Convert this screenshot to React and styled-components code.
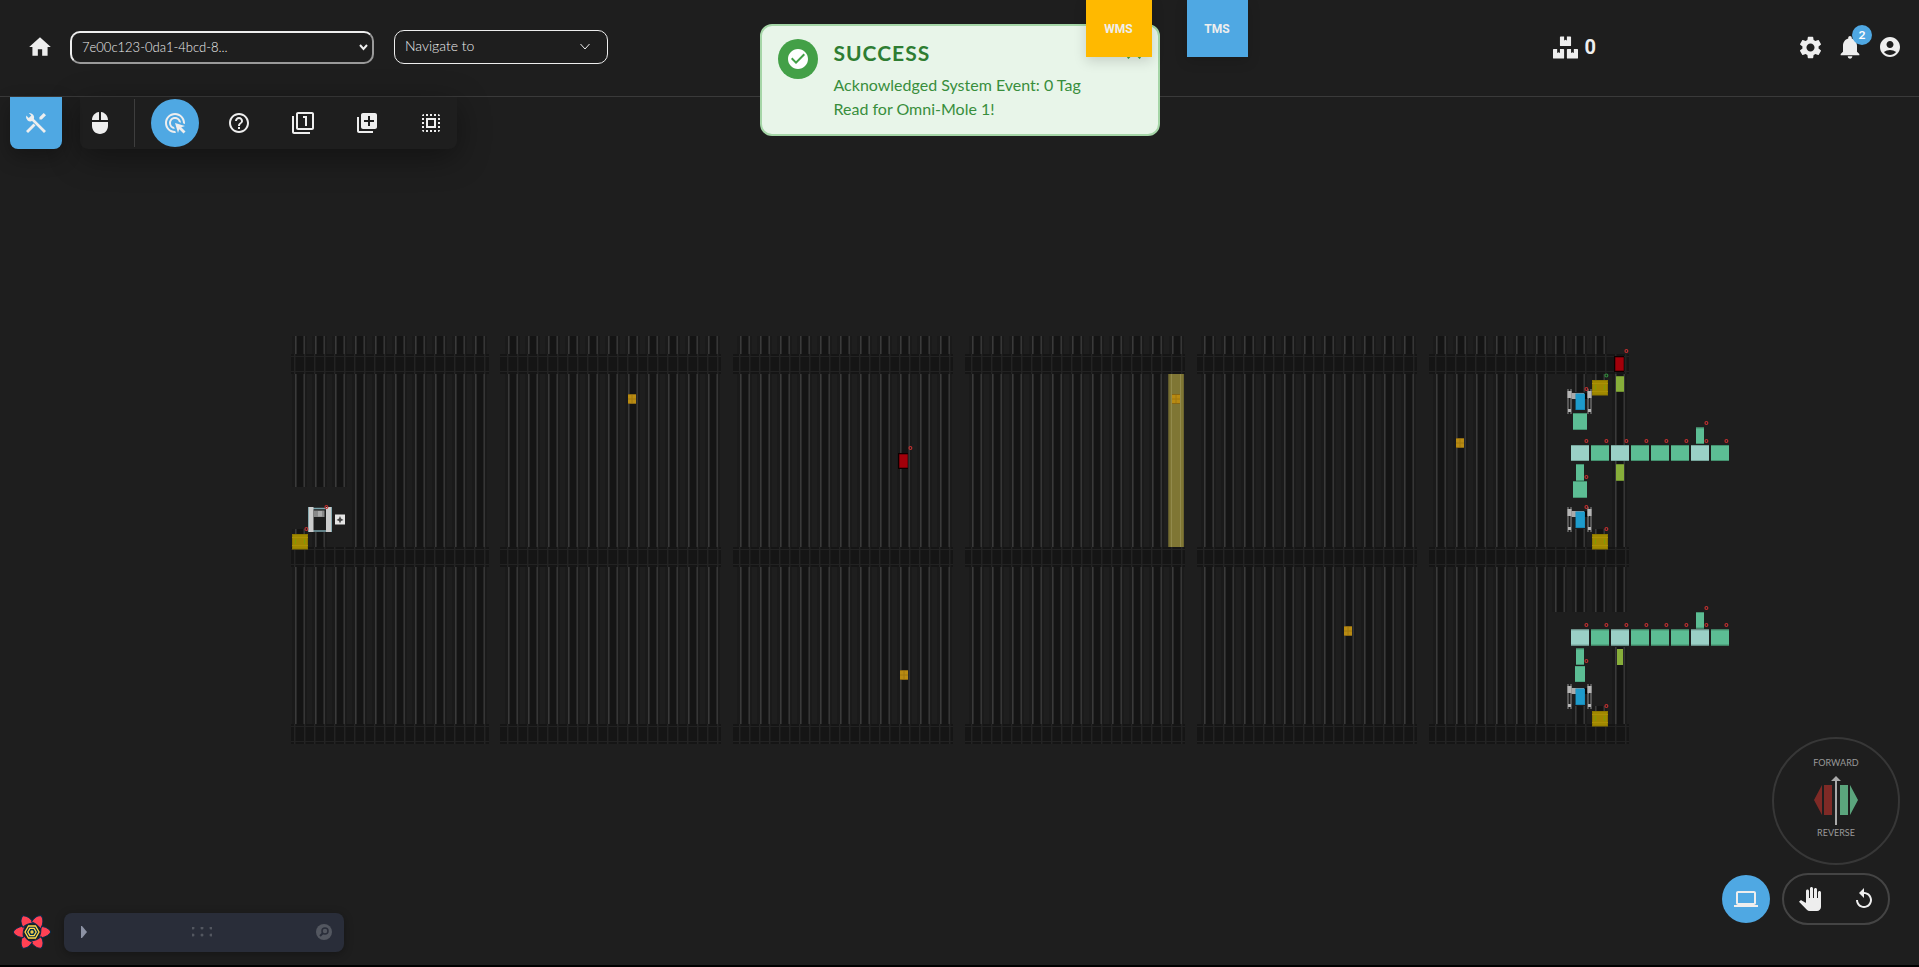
import React from "react";
import styled, { createGlobalStyle } from "styled-components";
import {
  MdHome, MdMouse, MdAdsClick, MdHelpOutline, MdOutlineFilter1, MdAddToPhotos, MdSelectAll,
  MdSettings, MdNotifications, MdAccountCircle, MdPanTool, MdReplay, MdOutlineLaptop, MdCheckCircle, MdClose,
} from "react-icons/md";
import { FaBoxes } from "react-icons/fa";

const FONT = '"Lato", "Open Sans", sans-serif';

const GlobalStyle = createGlobalStyle`
  *, *::before, *::after { box-sizing: border-box; }
  html { background: #000; }
  body { margin: 0; color: #eee; font-family: ${FONT}; }
  button, select, input { font-family: inherit; }
`;

const Page = styled.div`
  position: relative;
  display: flex;
  flex-direction: column;
  height: calc(100vh - 2px);
  background: #1e1e1e;
  overflow: hidden;
`;

const Header = styled.header`
  display: flex;
  align-items: center;
  height: 97px;
  padding: 0 17px 2px 28px;
  border-bottom: 1px solid #3a3a3a;
`;

const IconButton = styled.button`
  display: flex;
  position: relative;
  align-items: center;
  justify-content: center;
  width: ${(p) => p.$width || 24}px;
  height: ${(p) => p.$height || 24}px;
  padding: 0;
  border: 0;
  border-radius: ${(p) => p.$radius || "0"};
  background: ${(p) => (p.$active ? "#4fa8e3" : "transparent")};
  color: #eee;
  font-size: ${(p) => p.$size || 24}px;
  cursor: pointer;

  svg { flex: none; }
`;

const SelectWrap = styled.label`
  display: flex;
  position: relative;
  align-items: center;
  margin-left: ${(p) => p.$gap}px;
  color: #eee;
`;

const Chevron = styled.svg`
  position: absolute;
  right: ${(p) => p.$right}px;
  width: ${(p) => p.$width}px;
  height: 8px;
  fill: none;
  stroke: #eee;
  stroke-width: ${(p) => p.$stroke};
  pointer-events: none;
`;

const SystemSelect = styled.select`
  appearance: none;
  width: 304px;
  height: 33px;
  padding: 0 24px 0 10px;
  border: 2px outset #eee;
  border-radius: 10px;
  background: transparent;
  color: #eee;
  font-size: 13px;
  font-weight: 300;
`;

const NavigateSelect = styled(SystemSelect)`
  width: 214px;
  height: 34px;
  padding: 0 24px 4px 10px;
  border: 1px solid #eee;
  font-size: 14px;
`;

const Spacer = styled.div`
  flex: 1;
`;

const BoxCount = styled.div`
  display: flex;
  align-items: center;
  gap: 7px;
  margin-right: 202px;
  font-family: "Roboto", sans-serif;
  font-size: 20px;
  font-weight: 700;
`;

const Account = styled.nav`
  display: flex;
  gap: 16px;
`;

const Badge = styled.span`
  position: absolute;
  top: -10px;
  right: -10px;
  width: 20px;
  height: 20px;
  border-radius: 50%;
  background: #4fa8e3;
  color: #fff;
  font-size: 12px;
  font-weight: 700;
  line-height: 20px;
`;

const Tools = styled.div`
  display: flex;
  position: relative;
  align-items: flex-start;
  gap: 18px;
  padding-left: 10px;
`;

const ToolToggle = styled(IconButton)`
  border-radius: 0 0 8px 8px;
  box-shadow: 0 8px 20px rgba(0, 0, 0, 0.3);
`;

const ToolBar = styled.div`
  display: flex;
  align-items: center;
  gap: 16px;
  height: 52px;
  padding: 0 2px 0 0;
  border-radius: 0 0 8px 8px;
  background: #1e1e1e;
  box-shadow: 0 8px 32px rgba(0, 0, 0, 0.4);
`;

const Divider = styled.span`
  width: 1px;
  height: 48px;
  margin-left: -2px;
  background: #3e3e3e;
`;

const Floor = styled.main`
  flex: 1;
  min-height: 0;
  margin-top: -52px;
`;

const FloorMap = styled.svg`
  display: block;
  width: 100%;
  height: 100%;
`;

const Toast = styled.section`
  display: flex;
  position: absolute;
  top: 24px;
  left: 50%;
  gap: 16px;
  width: 400px;
  padding: 13px 16px;
  border: 2px solid #a5d6a7;
  border-radius: 12px;
  background: #e8f5e9;
  color: #388e3c;
  transform: translateX(-50%);
`;

const ToastIcon = styled.span`
  display: flex;
  flex: none;
  align-items: center;
  justify-content: center;
  width: 40px;
  height: 40px;
  border-radius: 50%;
  background: #43a047;
  color: #fff;
  font-size: 24px;
`;

const ToastBody = styled.div`
  flex: 1;
  padding-right: 32px;
`;

const ToastTitle = styled.h1`
  margin: 0 0 6px;
  color: #2e7d32;
  font-size: 21px;
  font-weight: 700;
  line-height: 28px;
  letter-spacing: 1px;
`;

const ToastText = styled.p`
  margin: 0;
  font-size: 16px;
  line-height: 24px;
`;

const ToastClose = styled(IconButton)`
  position: absolute;
  top: 14px;
  right: 12px;
  color: #43a047;
`;

const Tabs = styled.nav`
  display: flex;
  position: absolute;
  top: 0;
  left: 50%;
  gap: 35px;
  margin-left: 126px;
`;

const Tab = styled.button`
  width: ${(p) => p.$width}px;
  height: 57px;
  padding: 0;
  border: 0;
  background: ${(p) => p.$color};
  box-shadow: 0 4px 12px rgba(0, 0, 0, 0.15);
  color: #eee;
  font-family: "Roboto", sans-serif;
  font-size: 12px;
  font-weight: 700;
`;

const Controls = styled.aside`
  display: flex;
  position: absolute;
  right: 19px;
  bottom: 40px;
  flex-direction: column;
  align-items: flex-end;
  gap: 8px;
`;

const Dial = styled.div`
  display: flex;
  flex-direction: column;
  align-items: center;
  width: 128px;
  height: 128px;
  padding-top: 17px;
  border: 2px solid #373737;
  border-radius: 50%;
  color: #999;
  font-size: 9px;
  line-height: 14px;
`;

const DialArrows = styled.svg`
  width: 44px;
  height: 50px;
  margin: 6px 0 0;
`;

const ControlRow = styled.div`
  display: flex;
  align-items: center;
  gap: 12px;
  margin-right: 10px;
`;

const Pill = styled.div`
  display: flex;
  align-items: center;
  gap: 28px;
  width: 108px;
  height: 52px;
  padding: 0 12px;
  border: 2px solid #444;
  border-radius: 26px;
`;

const Dock = styled.div`
  display: flex;
  position: absolute;
  bottom: 13px;
  left: 12px;
  align-items: center;
  gap: 12px;
`;

const Panel = styled.div`
  display: flex;
  align-items: center;
  justify-content: space-between;
  width: 280px;
  height: 39px;
  padding: 0 12px 0 16px;
  border-radius: 8px;
  background: #292d39;
  box-shadow: 0 2px 10px rgba(0, 0, 0, 0.3);
`;

const Glyph = styled.svg`
  display: block;
  width: ${(p) => p.$w}px;
  height: ${(p) => p.$h || p.$w}px;
`;

const range = (n) => Array.from({ length: n }, (_, i) => i);

const BLOCKS = [
  { x: 295, lanes: 10, left: 291, right: 489 },
  { x: 508, lanes: 11, left: 500, right: 721 },
  { x: 740, lanes: 11, left: 733, right: 953 },
  { x: 972, lanes: 11, left: 965, right: 1185 },
  { x: 1204, lanes: 11, left: 1197, right: 1417 },
  { x: 1436, lanes: 6, left: 1429, right: 1629 },
];
const BAND_ROWS = [354, 547, 724];
const EXTRA_LANES = [
  [295, 529, 18], [315, 532, 18],
  [1555, 336, 18], [1575, 336, 18], [1595, 336, 18],
  [1575, 374, 18], [1595, 374, 8], [1615, 374, 173],
  [1575, 529, 21], [1595, 529, 18],
  [1555, 567, 45], [1575, 567, 45], [1595, 567, 45], [1615, 567, 45],
  [1615, 647, 77], [1575, 706, 21], [1595, 706, 18],
];
const RED_MARKS = [
  [1626, 351], [1586, 389], [1706, 423], [1586, 477], [1586, 507], [1606, 529],
  [1706, 608], [1586, 661], [1606, 706], [910, 448],
  ...range(8).map((i) => [1586 + 20 * i, 441]),
  ...range(8).map((i) => [1586 + 20 * i, 625]),
];

const Lane = ({ x, y, h }) => (
  <g>
    <rect x={x - 3} y={y} width="15" height={h} fill="#1a1a1a" />
    <rect x={x} y={y} width="10" height={h} fill="#141414" />
    <rect x={x} y={y} width="1.6" height={h} fill="#3a3a3a" />
    <rect x={x + 8.4} y={y} width="1.6" height={h} fill="#363636" />
  </g>
);

const Band = ({ x, start, y, right }) => (
  <g>
    <rect x={x} y={y} width={right - x} height="20" fill="#151515" />
    <path d={`M${x} ${y + 2.5}H${right}M${x} ${y + 17.5}H${right}`} stroke="#222" />
    {range(Math.ceil((right - start) / 10)).map((i) => (
      <rect key={i} x={start + i * 10} y={y} width="1.5" height="20" fill="#232323" />
    ))}
  </g>
);

const Box = ({ x, y, w, h, fill, edge }) => (
  <g>
    <rect x={x} y={y} width={w} height={h} fill={fill} />
    <path d={`M${x} ${y + 0.5}h${w}M${x} ${y + h - 0.5}h${w}`} stroke={edge} />
  </g>
);

const Pallet = ({ x, y }) => (
  <g>
    <rect x={x} y={y} width="16" height="15.5" fill="#8d7800" />
    <rect x={x + 1} y={y + 1} width="14" height="13.5" fill="#a08800" />
    <path d={`M${x} ${y + 3.5}h16M${x} ${y + 11.5}h16`} stroke="#ab9105" />
    <path d={`M${x + 3.5} ${y + 5}v5M${x + 12.5} ${y + 5}v5`} stroke="#7f9d05" />
  </g>
);

const Tote = ({ x, y }) => (
  <g>
    <rect x={x} y={y} width="8" height="10" fill="#8a6712" />
    <rect x={x} y={y + 1} width="8" height="8" fill="#b98b12" />
    <path d={`M${x + 4} ${y + 1}v8M${x} ${y + 5}h8`} stroke="#a0780f" />
  </g>
);

const RedBot = ({ x, y }) => (
  <g>
    <rect x={x - 1} y={y - 1} width="10" height="16" fill="#0d0000" />
    <rect x={x} y={y} width="9" height="14" rx="1" fill="#760008" />
    <rect x={x + 1} y={y + 1} width="7" height="12" fill="#a3000a" />
  </g>
);

const Mark = ({ x, y, color = "#bf3030" }) => (
  <ellipse cx={x + 0.4} cy={y} rx="1.4" ry="1.5" fill="none" stroke={color} strokeWidth="1.2" />
);

const Lift = ({ y }) => (
  <g>
    <rect x="1571" y={y + 4} width="18" height="6" fill="#aaa" />
    <rect x="1584" y={y + 4} width="4" height="6" fill="#050505" />
    {[1567, 1587].map((x) => (
      <g key={x}>
        <path d={`M${x + 1} ${y}v25M${x + 4} ${y}v25`} stroke="#6b6b6b" strokeWidth="1.5" />
        <path d={`M${x + 0.5} ${y + 2}h4v7h-4zM${x + 1} ${y + 20}h3v3h-3z`} fill="#b5b5b5" />
      </g>
    ))}
    <rect x="1575.5" y={y + 4.5} width="9.5" height="16.5" fill="#1787b5" />
    <rect x="1576" y={y + 5} width="8.5" height="15" fill="#1e9bcb" />
  </g>
);

const Conveyor = ({ y }) => (
  <g>
    {range(8).map((i) => (
      <Box
        key={i} x={1571 + i * 20} y={y} w={18} h={16}
        fill={[0, 2, 6].includes(i) ? "#9ad0c6" : "#5cbd94"}
        edge={[0, 2, 6].includes(i) ? "#76a59b" : "#44916f"}
      />
    ))}
    <Box x={1696} y={y - 17.5} w={8} h={16.5} fill="#5cbd94" edge="#44916f" />
  </g>
);

function Warehouse() {
  return (
    <FloorMap viewBox="0 97 1919 868" role="img" aria-label="Warehouse floor">
      {BLOCKS.map((b, n) =>
        range(b.lanes).map((i) => {
          const x = b.x + i * 20;
          const short = n === 0 && i < 3;
          return (
            <g key={x}>
              <Lane x={x} y={336} h={18} />
              <Lane x={x} y={374} h={short ? 113 : 173} />
              <Lane x={x} y={567} h={157} />
            </g>
          );
        })
      )}
      {EXTRA_LANES.map(([x, y, h]) => <Lane key={`${x}-${y}`} x={x} y={y} h={h} />)}
      {BAND_ROWS.map((y) => BLOCKS.map((b) => <Band key={`${b.x}-${y}`} x={b.left} start={b.x - 1} y={y} right={b.right} />))}

      <rect x="1168.5" y="374" width="15" height="173" fill="#7f7634" />
      <path d="M1171.5 374v173M1180.5 374v173" stroke="#928a4c" />
      <path d="M1169 374v173M1183.5 374v173" stroke="#6d652f" />

      <Tote x={628} y={394} />
      <Tote x={1172} y={394} />
      <Tote x={1456} y={438} />
      <Tote x={1344} y={626} />
      <Tote x={900} y={670} />

      <RedBot x={1615} y={357} />
      <RedBot x={899} y={454} />
      <Pallet x={292} y={534} />
      <Pallet x={1592} y={380} />
      <Pallet x={1592} y={534} />
      <Pallet x={1592} y={711} />

      <Box x={1616} y={376} w={8} h={16} fill="#87ae3a" edge="#6d8e2e" />
      <Box x={1616} y={464} w={8} h={17} fill="#87ae3a" edge="#6d8e2e" />
      <Box x={1617} y={649} w={6} h={16} fill="#87ae3a" edge="#87ae3a" />
      <Conveyor y={445} />
      <Conveyor y={629.5} />
      <Box x={1573} y={413} w={14} h={17} fill="#5cbd94" edge="#44916f" />
      <Box x={1576} y={464} w={8} h={17} fill="#5cbd94" edge="#44916f" />
      <Box x={1573} y={481} w={14} h={17} fill="#5cbd94" edge="#44916f" />
      <Box x={1576} y={648.5} w={8} h={16.5} fill="#5cbd94" edge="#44916f" />
      <Box x={1575} y={666} w={10} h={16} fill="#5cbd94" edge="#4ea581" />
      <Lift y={389} />
      <Lift y={507} />
      <Lift y={684} />

      <rect x="308" y="507" width="24" height="25" fill="#1c1c1c" />
      <path d="M313 508.5h14M313 531h14" stroke="#78a3ab" strokeWidth="1.4" />
      <path d="M308.5 507v25M331.5 507v25" stroke="#86a9af" />
      <rect x="309" y="507" width="4.5" height="25" fill="#ccc" />
      <rect x="326" y="507" width="5" height="25" fill="#ccc" />
      <rect x="313.5" y="510.5" width="11" height="6.5" fill="#888" />
      <rect x="318" y="511" width="4" height="5.5" fill="#aaa" />
      <rect x="335" y="514.5" width="10" height="10" fill="#e4e4e4" />
      <path d="M340 516l1 2.500 2.500 1.500-2.500 1-1 2.500-1-2.500-2.500-1 2.500-1.500z" fill="#444" />
      <Mark x={326} y={507} />
      <Mark x={306} y={529} />
      {RED_MARKS.map(([x, y]) => <Mark key={`${x}-${y}`} x={x} y={y} />)}
      <Mark x={1606} y={375.5} color="#2f8a3a" />
    </FloorMap>
  );
}

const FlowerLogo = () => (
  <Glyph $w={40} viewBox="-20 -20 40 40" aria-hidden="true">
    {range(6).map((i) => (
      <path
        key={i} transform={`rotate(${i * 60})`}
        d="M8.500 -5.500C13 -5.500 17.500 -3.500 18.700 0C17 3.500 12 6 6.500 6C8.500 3 9.500 -1 8.500 -5.500Z"
        fill="#ff4154" stroke="#002c4b" strokeWidth="1"
      />
    ))}
    <g fill="none" stroke="#ffd94c" strokeWidth="1.3">
      <path fill="#002c4b" d="M-7 0L-3.500 -6H3.500L7 0L3.500 6H-3.500Z" />
      <path d="M-4.200 0L-2.100 -3.600H2.100L4.200 0L2.100 3.600H-2.100Z" />
      <circle r="1" />
    </g>
  </Glyph>
);

const ToolsGlyph = () => (
  <Glyph $w={24} viewBox="0 0 24 24" aria-hidden="true" fill="currentColor">
    <path d="M6.500 2.200a4.500 4.500 0 0 0-1.700-.2l2.500 2.600-2.500 2.500-2.600-2.500a4.500 4.500 0 0 0 5.900 5.500L20 22l2-2L9.900 8a4.500 4.500 0 0 0-3.400-5.800Z" />
    <path d="m2 20 7.500-7.500 2 2L4 22zM13.500 10.500l2-2-.1-2.200L19.700 2 22 4.300l-4.300 4.300-2.200-.1-2 2z" />
  </Glyph>
);

export default function App() {
  return (
    <>
      <GlobalStyle />
      <Page>
        <Header>
          <IconButton $size={26} aria-label="Home"><MdHome /></IconButton>
          <SelectWrap $gap={18}>
            <SystemSelect aria-label="System"><option>7e00c123-0da1-4bcd-8...</option></SystemSelect>
            <Chevron $right={6} $width={9} $stroke={2} viewBox="0 0 9 8"><path d="M1 2l3.500 4L8 2" /></Chevron>
          </SelectWrap>
          <SelectWrap $gap={20}>
            <NavigateSelect aria-label="Navigate to"><option>Navigate to</option></NavigateSelect>
            <Chevron $right={18} $width={10} $stroke={1} viewBox="0 0 10 8"><path d="M.5 1L5 6l4.500-5" /></Chevron>
          </SelectWrap>
          <Spacer />
          <BoxCount><FaBoxes size={25} />0</BoxCount>
          <Account>
            <IconButton $size={27} aria-label="Settings"><MdSettings /></IconButton>
            <IconButton $size={28} aria-label="Notifications"><MdNotifications /><Badge>2</Badge></IconButton>
            <IconButton aria-label="Account"><MdAccountCircle /></IconButton>
          </Account>
        </Header>

        <Tools>
          <ToolToggle $active $width={52} $height={52} aria-label="Tools"><ToolsGlyph /></ToolToggle>
          <ToolBar>
            <IconButton $width={40} $height={48} aria-label="Mouse"><MdMouse /></IconButton>
            <Divider />
            <IconButton $active $width={48} $height={48} $radius="50%" aria-label="Click"><MdAdsClick /></IconButton>
            <IconButton $width={48} $height={48} aria-label="Help"><MdHelpOutline /></IconButton>
            <IconButton $width={48} $height={48} aria-label="Single"><MdOutlineFilter1 /></IconButton>
            <IconButton $width={48} $height={48} aria-label="Add"><MdAddToPhotos /></IconButton>
            <IconButton $width={48} $height={48} aria-label="Select all"><MdSelectAll /></IconButton>
          </ToolBar>
        </Tools>

        <Floor><Warehouse /></Floor>

        <Toast role="status">
          <ToastIcon><MdCheckCircle /></ToastIcon>
          <ToastBody>
            <ToastTitle>SUCCESS</ToastTitle>
            <ToastText>Acknowledged System Event: 0 Tag Read for Omni-Mole 1!</ToastText>
          </ToastBody>
          <ToastClose aria-label="Close"><MdClose /></ToastClose>
        </Toast>

        <Tabs>
          <Tab $width={66} $color="#ffb900">WMS</Tab>
          <Tab $width={61} $color="#4fa8e3">TMS</Tab>
        </Tabs>

        <Controls>
          <Dial>
            FORWARD
            <DialArrows viewBox="0 0 44 50" aria-hidden="true">
              <path d="M8 9v30L0 24zM10 9h8v30h-8z" fill="#7f2a26" />
              <path d="M26 9h8v30h-8zM36 9v30l8-15z" fill="#5ba57d" />
              <path d="M21 4h2v45h-2zM17 5l5-5 5 5z" fill="#aaa" />
            </DialArrows>
            REVERSE
          </Dial>
          <ControlRow>
            <IconButton $active $width={48} $height={48} $radius="50%" aria-label="Screen view"><MdOutlineLaptop /></IconButton>
            <Pill>
              <IconButton $width={28} aria-label="Pan"><MdPanTool /></IconButton>
              <IconButton aria-label="Reset"><MdReplay /></IconButton>
            </Pill>
          </ControlRow>
        </Controls>

        <Dock>
          <FlowerLogo />
          <Panel>
            <Glyph $w={8} $h={12} viewBox="0 0 8 12"><path d="M1 0H2L7 6 2 12H1Z" fill="#8c92a4" /></Glyph>
            <Glyph $w={20} $h={10} viewBox="0 0 20 10" fill="#535760">
              {[1, 10, 19].map((x) => [1, 8].map((y) => <circle key={`${x}-${y}`} cx={x} cy={y} r="1.5" />))}
            </Glyph>
            <Glyph $w={16} viewBox="0 0 16 16">
              <circle cx="8" cy="8" r="8" fill="#535760" />
              <path d="M4 12l3-3" stroke="#292d39" strokeWidth="2" />
              <circle cx="9" cy="7" r="3" fill="none" stroke="#292d39" strokeWidth="1.5" />
            </Glyph>
          </Panel>
        </Dock>
      </Page>
    </>
  );
}
